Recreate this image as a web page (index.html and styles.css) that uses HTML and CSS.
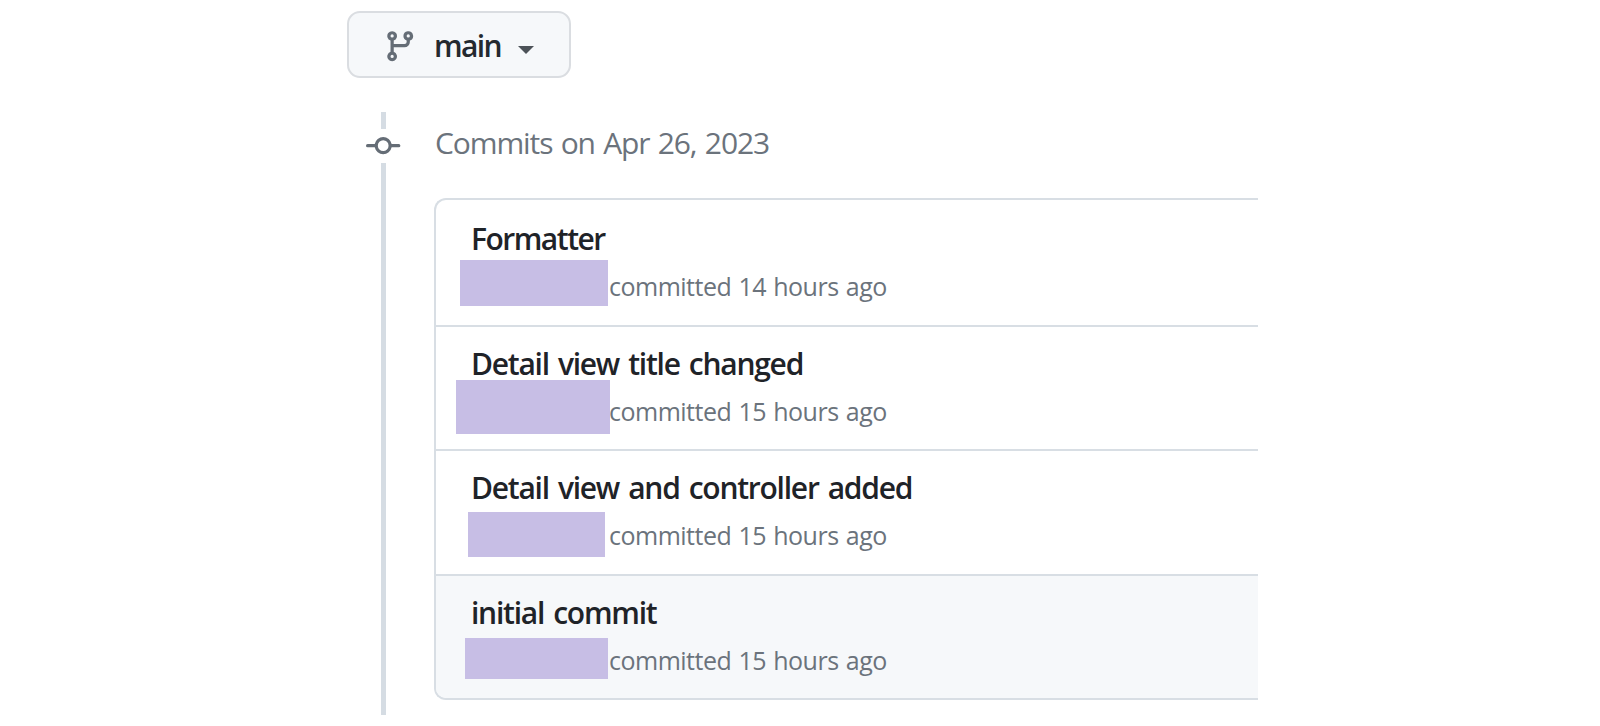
FILE: index.html
```html
<!DOCTYPE html>
<html lang="en">
<head>
    <meta charset="UTF-8">
    <meta name="viewport" content="width=device-width, initial-scale=1.0">
    <title>Commits</title>
    <link rel="stylesheet" href="styles.css">
</head>
<body>
    <main class="commits-page">
        <button class="branch-button" type="button">
            <svg class="icon branch-icon" viewBox="0 0 16 16"><path d="M9.5 3.25a2.25 2.25 0 1 1 3 2.122V6A2.5 2.5 0 0 1 10 8.5H5v2.128a2.251 2.251 0 1 1-1.5 0V5.372a2.25 2.25 0 1 1 1.5 0V7h5a1 1 0 0 0 1-1v-.628A2.25 2.25 0 0 1 9.5 3.25Zm-6 0a.75.75 0 1 0 1.5 0 .75.75 0 0 0-1.5 0Zm8.25-.75a.75.75 0 1 0 0 1.5.75.75 0 0 0 0-1.5ZM4.25 12a.75.75 0 1 0 0 1.5.75.75 0 0 0 0-1.5Z"/></svg>
            <span class="branch-name">main</span>
            <span class="caret"></span>
        </button>

        <div class="timeline">
            <div class="timeline-rail">
                <div class="rail-top"></div>
                <svg class="icon commit-icon" viewBox="0 0 16 16"><path d="M11.93 8.5a4.002 4.002 0 0 1-7.86 0H.75a.75.75 0 0 1 0-1.5h3.32a4.002 4.002 0 0 1 7.86 0h3.32a.75.75 0 0 1 0 1.5Zm-1.43-.75a2.5 2.5 0 1 0-5 0 2.5 2.5 0 0 0 5 0Z"/></svg>
                <div class="rail-bottom"></div>
            </div>

            <div class="timeline-body">
                <h2 class="commit-date">Commits on Apr 26, 2023</h2>

                <ul class="commit-list">
                    <li class="commit">
                        <p class="commit-title title-tight">Formatter</p>
                        <p class="commit-meta">committed 14 hours ago</p>
                        <span class="author-mask mask-1"></span>
                    </li>
                    <li class="commit">
                        <p class="commit-title">Detail view title changed</p>
                        <p class="commit-meta">committed 15 hours ago</p>
                        <span class="author-mask mask-2"></span>
                    </li>
                    <li class="commit">
                        <p class="commit-title">Detail view and controller added</p>
                        <p class="commit-meta">committed 15 hours ago</p>
                        <span class="author-mask mask-3"></span>
                    </li>
                    <li class="commit commit-active">
                        <p class="commit-title">initial commit</p>
                        <p class="commit-meta">committed 15 hours ago</p>
                        <span class="author-mask mask-4"></span>
                    </li>
                </ul>
            </div>
        </div>
    </main>
</body>
</html>
```
FILE: styles.css
```css
/* General Page Styling */
* {
    box-sizing: border-box;
}

body {
    margin: 0;
    background-color: #fff;
    color: #1f2328;
    font-family: "Segoe UI", "Open Sans", "Noto Sans", sans-serif;
    overflow: hidden;
}

.commits-page {
    width: 911px;
    height: 726px;
    margin-left: 347px;
    padding-top: 11px;
    overflow: hidden;
}

.icon {
    display: block;
    flex: none;
    width: 34.4px;
    height: 34.4px;
    fill: #656d76;
}

/* Branch Button */
.branch-button {
    display: flex;
    align-items: center;
    width: 224px;
    height: 67px;
    padding: 0 0 0 33.5px;
    border: 2px solid #dadde1;
    border-radius: 13px;
    background-color: #f6f8fa;
    color: #24292f;
    font-family: inherit;
}

.branch-icon {
    margin-top: 4px;
}

.branch-name {
    width: 84px;
    margin-top: 3px;
    margin-left: 17px;
    font-size: 30px;
    font-weight: 600;
    line-height: 40px;
    letter-spacing: -1.6px;
    text-align: left;
}

.caret {
    margin-top: 10px;
    border: 8px solid transparent;
    border-top: 8.5px solid #4c5258;
    border-bottom: 0;
}

/* Timeline */
.timeline {
    display: flex;
    margin-top: 34px;
}

.timeline-rail {
    display: flex;
    flex-direction: column;
    align-items: center;
    width: 35px;
    height: 603px;
    margin-left: 19px;
}

.rail-top,
.rail-bottom {
    width: 5px;
    background-color: #d5dce3;
}

.rail-top {
    height: 17px;
}

.rail-bottom {
    flex: 1;
}

.timeline-body {
    flex: 1;
    margin-left: 33px;
}

.commit-date {
    height: 40px;
    margin: 11px 0 35px 1px;
    color: #6b737c;
    font-size: 30px;
    font-weight: 400;
    line-height: 40px;
    letter-spacing: -1.1px;
    word-spacing: 1.6px;
}

/* Commit List */
.commit-list {
    margin: 0;
    padding: 0;
    border: 2px solid #d8dee4;
    border-right: 0;
    border-radius: 12px 0 0 12px;
    list-style: none;
}

.commit {
    position: relative;
    height: 124.5px;
    padding: 19px 0 0 35px;
}

.commit + .commit {
    padding-top: 17px;
    border-top: 2px solid #d8dee4;
}

.commit-active {
    border-radius: 0 0 0 10px;
    background-color: #f6f8fa;
}

.commit-title,
.commit-meta {
    margin: 0;
    white-space: nowrap;
}

.commit-title {
    font-size: 30px;
    font-weight: 600;
    line-height: 40px;
    letter-spacing: -1.25px;
    word-spacing: 2.6px;
}

.title-tight {
    letter-spacing: -1.5px;
}

.commit-meta {
    margin-top: 8px;
    padding-left: 138px;
    color: #6b737c;
    font-size: 25px;
    line-height: 38px;
    letter-spacing: -0.5px;
    word-spacing: 1.2px;
}

/* Blocks covering the author names */
.author-mask {
    position: absolute;
    background-color: #c7bee5;
}

.mask-1 {
    top: 60px;
    left: 24px;
    width: 148px;
    height: 46px;
}

.mask-2 {
    top: 53px;
    left: 20px;
    width: 154px;
    height: 54px;
}

.mask-3 {
    top: 61px;
    left: 32px;
    width: 137px;
    height: 45px;
}

.mask-4 {
    top: 62px;
    left: 29px;
    width: 143px;
    height: 41px;
}
```
